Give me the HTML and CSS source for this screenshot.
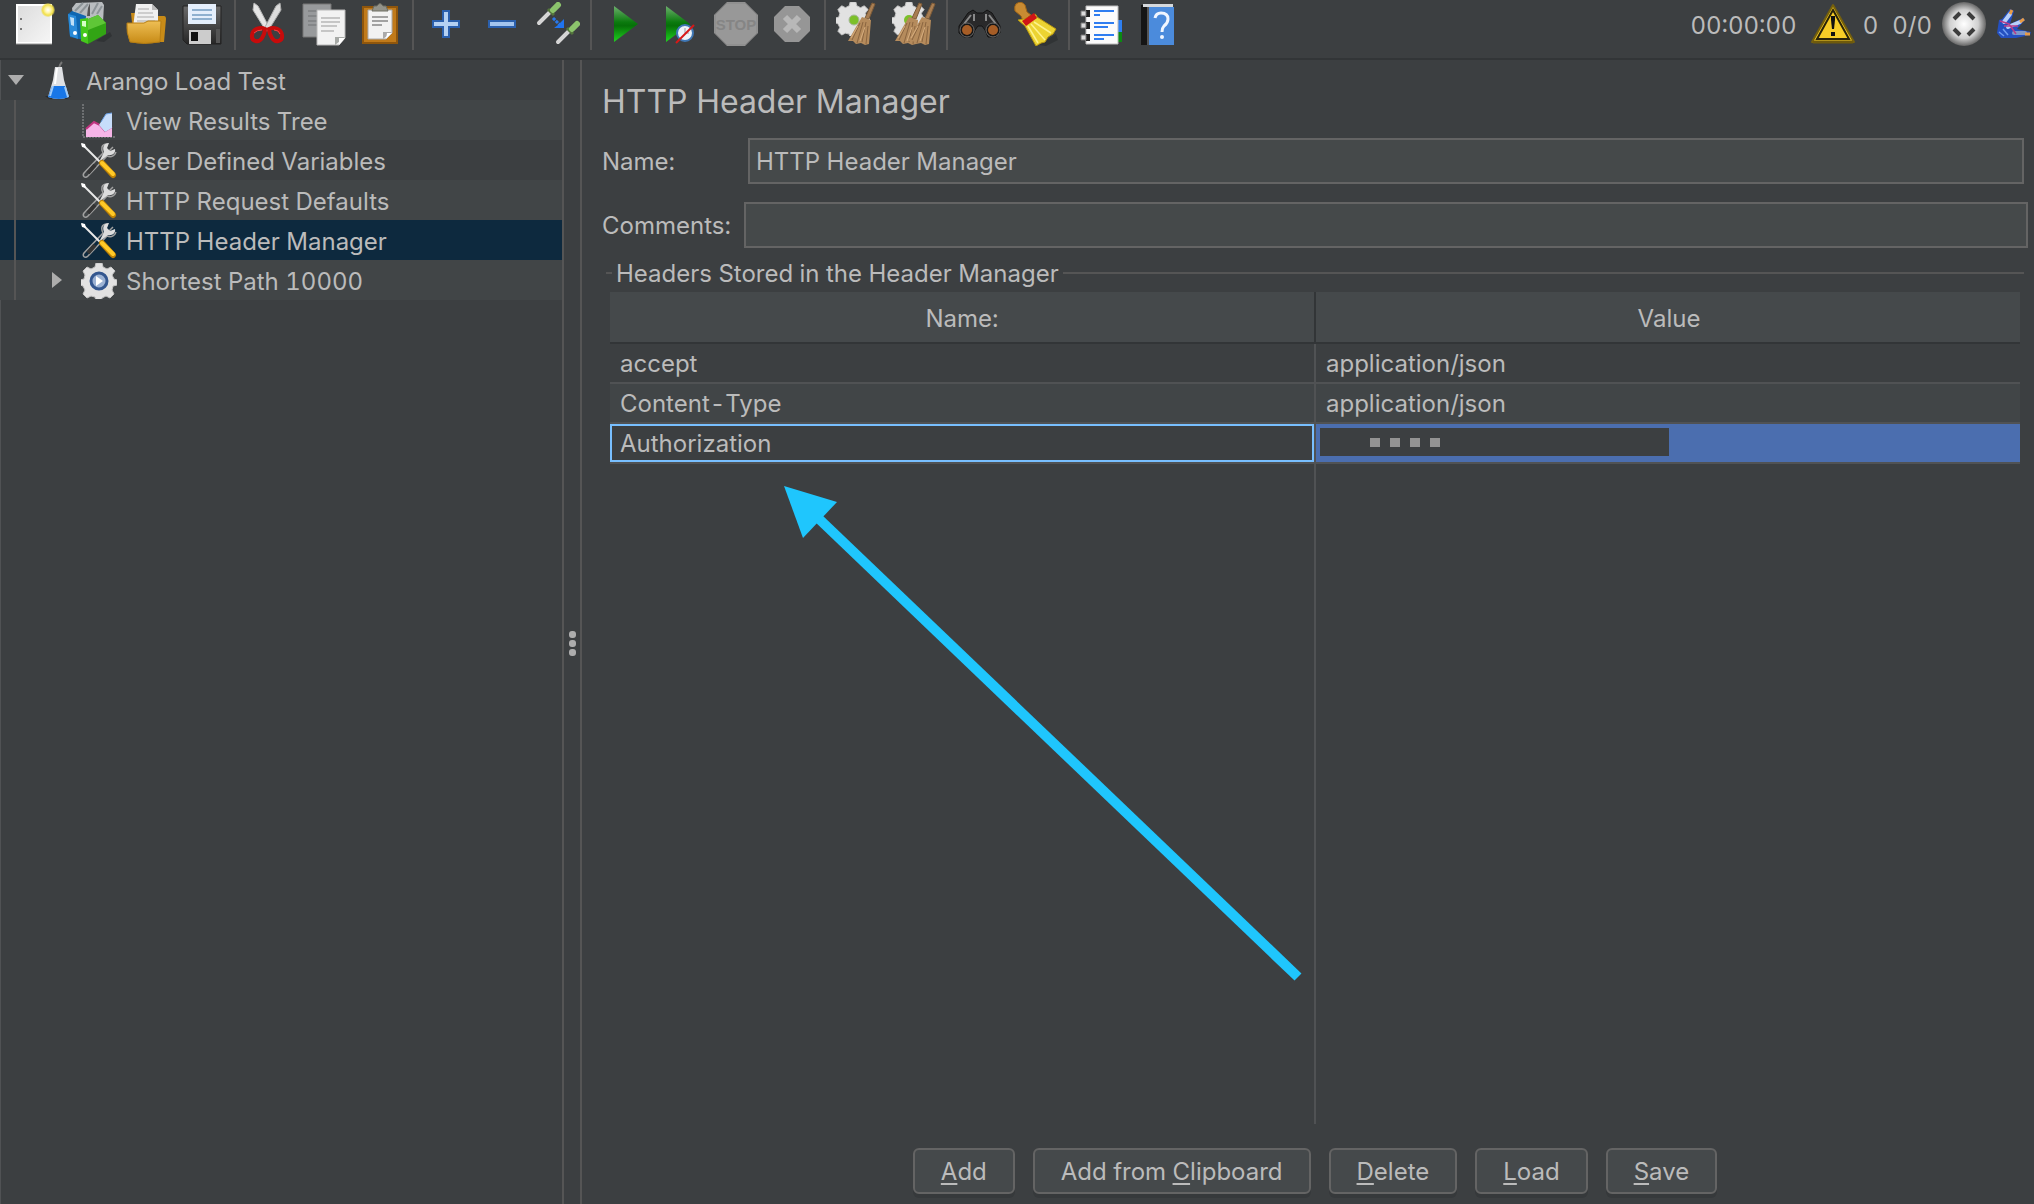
FILE: index.html
```html
<!DOCTYPE html>
<html lang="en">
<head>
<meta charset="utf-8">
<title>Arango Load Test</title>
<link rel="stylesheet" href="styles.css">
</head>
<body>
<svg class="defs" aria-hidden="true">
  <defs>
    <linearGradient id="paper" x1="0" y1="0" x2="1" y2="1"><stop offset="0" stop-color="#dcdcdc"/><stop offset="1" stop-color="#f6f6f6"/></linearGradient>
    <radialGradient id="glow"><stop offset="0" stop-color="#fff"/><stop offset=".4" stop-color="#fff6a8"/><stop offset=".75" stop-color="#f2e04a"/><stop offset="1" stop-color="#e8d84a" stop-opacity=".3"/></radialGradient>
    <linearGradient id="folder" x1="0" y1="0" x2="0" y2="1"><stop offset="0" stop-color="#eebf55"/><stop offset="1" stop-color="#c78a15"/></linearGradient>
    <linearGradient id="green" x1="0" y1="0" x2="0" y2="1"><stop offset="0" stop-color="#6db06d"/><stop offset=".45" stop-color="#0b7a0e"/><stop offset=".55" stop-color="#067008"/><stop offset="1" stop-color="#1fd31f"/></linearGradient>
    <linearGradient id="steel" x1="0" y1="0" x2="0" y2="1"><stop offset="0" stop-color="#6a6a6a"/><stop offset="1" stop-color="#262626"/></linearGradient>
    <radialGradient id="ball"><stop offset="0" stop-color="#fff"/><stop offset=".65" stop-color="#d0d0d0"/><stop offset="1" stop-color="#666"/></radialGradient>
    <symbol id="broom" viewBox="0 0 30 44"><path d="M24 1 27 2 21 17 17 16Z" fill="#a87e52" stroke="#7d5b38"/><path d="M14 15 23 18 21 42 17 43 13 41 8 42 5 39 0 39 8 25Z" fill="#b58b5c"/><path d="M12 21 4 38M15 20 9 41M18 20 14 40M20 24 18 42" stroke="#8a6540" fill="none"/><path d="M10 24 3 36M17 25 12 39" stroke="#d6ad7e" fill="none"/></symbol>
    <symbol id="gear" viewBox="0 0 36 36"><path d="M15 0h6l1 4 4 2 4-2 4 4-3 4 2 4 3 1v5l-4 1-1 4 2 4-4 4-4-2-4 2-1 3h-5l-1-4-4-1-4 2-4-4 2-4-2-4-3-1v-5l4-1 1-4-2-4 4-4 4 2 4-2Z" fill="#e2e2e2" stroke="#c4c4c4"/></symbol>
    <symbol id="tools" viewBox="0 0 40 40"><path d="M33 7 29 11 26 9 27 4C21 4 21 9 23 13L4 33c-2 3 1 6 4 3L27 16c5 2 8-1 9-4" fill="none" stroke="#a0a0a0" stroke-width="1.5"/><path d="M24 12C22 7 24 3 29 3L27 8 30 11 35 9C36 13 32 16 28 15L19 22Z" fill="#ddd"/><path d="M15 25 8 33" stroke="#343434" stroke-width="4"/><path d="M2 4 20 22" stroke="#e9e9e9" stroke-width="2"/><path d="M1 3 5 4 6 8 2 7Z" fill="#fff"/><path d="M22 23 33 35" stroke="#bd8104" stroke-width="6" stroke-linecap="round"/><path d="M22 23 33 34" stroke="#ffc927" stroke-width="4" stroke-linecap="round"/></symbol>
  </defs>
</svg>

<header class="toolbar">
  <button class="tool" aria-label="New"><svg viewBox="0 0 44 44"><path d="M5 3H39V41H5Z" fill="url(#paper)" stroke="#fff" stroke-width="2"/><path d="M4 42H40" stroke="#999"/><path d="M8 17h2M8 27h2" stroke="#777" stroke-width="2"/><circle cx="36" cy="8" r="7" fill="url(#glow)"/></svg></button>
  <button class="tool" aria-label="Templates"><svg viewBox="0 0 44 44"><path d="M28 39 42 30 44 34 36 40Z" fill="#303335"/><path d="M4 6 8 1 34 0 36 3 35 20 6 22Z" fill="#b9bdc0"/><path d="M7 9 15 1M12 11 20 2M24 12 30 1M29 12 34 4" stroke="#8d9498" stroke-width="2"/><path d="M20 6 22 1V14H19Z" fill="#555"/><path d="M0 12 4 9 18 14 16 38 2 35Z" fill="#0f67b1"/><path d="M0 12 8 14 10 37 2 34Z" fill="#2a8bd8"/><path d="M2 15 6 16V24L3 23Z" fill="#bfe0f7"/><circle cx="7" cy="31" r="2" fill="#fff"/><path d="M12 17 20 16V42L13 39Z" fill="#45c81c"/><path d="M20 17 30 13 38 21V32L20 42Z" fill="#32a414"/><path d="M20 17 30 13 38 21 20 28Z" fill="#5fc637"/><path d="M14 19H18V25L14 24Z" fill="#d6ffc6"/><circle cx="17" cy="33" r="2" fill="#fff"/></svg></button>
  <button class="tool" aria-label="Open"><svg viewBox="0 0 44 44"><path d="M7 11H14L15 14H40Q42 14 42 17L40 40H10Z" fill="#c88b17"/><path d="M12 2H28L34 8V25H9Z" fill="#f0f0f0"/><path d="M28 2V8H34" fill="#bbb"/><path d="M14 7H25M14 11H29M13 15H30M13 19H31" stroke="#aaa"/><path d="M3 21H20L24 19H37L36 40Q20 43 6 40Q2 30 3 21Z" fill="url(#folder)" stroke="#b67d12"/></svg></button>
  <button class="tool" aria-label="Save"><svg viewBox="0 0 44 44"><path d="M3 4H41V42H7L3 38Z" fill="url(#steel)" stroke="#222"/><path d="M8 2H36V22H8Z" fill="#e4eefb"/><path d="M12 8H32M12 13H32M12 17H32" stroke="#8fb0cf" stroke-width="2"/><path d="M9 28H31V42H9Z" fill="#ccc"/><path d="M11 30H18V39H11Z" fill="#111"/><path d="M36 27H40V41H36Z" fill="#555"/></svg></button>
  <span class="sep"></span>
  <button class="tool" aria-label="Cut"><svg viewBox="0 0 44 44"><path d="M8 1 12 4 24 27 20 29 7 8Z" fill="#e6e6e6" stroke="#b5b5b5"/><path d="M34 1 30 4 18 27 22 29 35 8Z" fill="#dcdcdc" stroke="#aaa"/><path d="M19 27C15 25 7 26 6 33S13 41 16 36 19 29 19 27ZM23 27C27 25 35 26 36 33S29 41 26 36 23 29 23 27Z" fill="none" stroke="#c70b0b" stroke-width="4"/><path d="M8 31Q11 28 16 28M28 28Q33 28 34 32" fill="none" stroke="#f34545"/></svg></button>
  <button class="tool" aria-label="Copy"><svg viewBox="0 0 44 44"><path d="M1 2H29V35H1Z" fill="#989a9c" stroke="#777"/><path d="M6 9H24M6 14H24M6 19H15M6 23H15" stroke="#717375"/><path d="M15 8H43V36L37 43H15Z" fill="#f2f2f2" stroke="#b8b8b8"/><path d="M19 16H38M19 20H38M19 24H35M19 29H32" stroke="#999"/><path d="M43 35H33V43Z" fill="#a7aaa7"/><path d="M37 43 43 36H37Z" fill="#fff"/></svg></button>
  <button class="tool" aria-label="Paste"><svg viewBox="0 0 44 44"><path d="M5 5H39V41H5Z" fill="#c07a1a" stroke="#8f560c" stroke-width="2"/><path d="M10 8H34V31L28 37H10Z" fill="#f2f2f2" stroke="#aaa"/><path d="M14 15H30M14 19H30M14 23H24" stroke="#888" stroke-width="1.5"/><path d="M34 30H25V37Z" fill="#aaa"/><path d="M28 37 34 31H29Z" fill="#fff"/><path d="M14 9 16 4H19Q22-1 25 4H28L30 9Z" fill="#93938a" stroke="#6c6c60"/></svg></button>
  <span class="sep"></span>
  <button class="tool" aria-label="Expand all"><svg viewBox="0 0 44 44"><path d="M19 9H25V19H35V25H25V35H19V25H9V19H19Z" fill="#b5d1f2" stroke="#2b60ad" stroke-width="2"/></svg></button>
  <button class="tool" aria-label="Collapse all"><svg viewBox="0 0 44 44"><path d="M9 19H35V25H9Z" fill="#a4c5ee" stroke="#2b60ad" stroke-width="2"/></svg></button>
  <button class="tool" aria-label="Toggle"><svg viewBox="0 0 44 44"><path d="M3 21 14 10M22 40 33 29" stroke="#d5d5d5" stroke-width="4" stroke-linecap="round"/><path d="M12 7 18 13M31 26 37 32" stroke="#53743c" stroke-width="3"/><path d="M17 8 22 3M36 27 41 22" stroke="#8cc46c" stroke-width="6" stroke-linecap="round"/><path d="M17 16 24 23" stroke="#2a78e8" stroke-width="3" stroke-dasharray="3 1"/><path d="M28 17V26H18L22 23 24 21Z" fill="#1f74f0"/></svg></button>
  <span class="sep"></span>
  <button class="tool" aria-label="Start"><svg viewBox="0 0 44 44"><path d="M12 4 36 22 12 40Z" fill="url(#green)"/></svg></button>
  <button class="tool" aria-label="Start no pauses"><svg viewBox="0 0 44 44"><path d="M8 4 32 22 8 40Z" fill="url(#green)"/><circle cx="27" cy="31" r="8" fill="#edf3f8" stroke="#3f77b5" stroke-width="2"/><path d="M27 26V31H31" fill="none" stroke="#99a"/><path d="M18 41 36 23" stroke="#d81818" stroke-width="2"/></svg></button>
  <button class="tool" aria-label="Stop"><svg viewBox="0 0 44 44"><path d="M13 0H31L44 13V31L31 44H13L0 31V13Z" fill="#989898"/><path d="M13 1H31L43 13V31L31 43H13L1 31V13Z" fill="none" stroke="#888"/><text x="22" y="28" class="stop-label">STOP</text></svg></button>
  <button class="tool" aria-label="Shutdown"><svg viewBox="0 0 44 44"><path d="M15 4H29L40 15V29L29 40H15L4 29V15Z" fill="#969696"/><path d="M15 15 29 29M29 15 15 29" stroke="#b8b8b8" stroke-width="6"/></svg></button>
  <span class="sep"></span>
  <button class="tool" aria-label="Clear"><svg viewBox="0 0 44 44"><use href="#gear" x="0" y="0" width="34" height="34"/><circle cx="18" cy="18" r="5" fill="#7cc02a" stroke="#a8b89b"/><use href="#broom" x="12" y="0" width="30" height="44"/></svg></button>
  <button class="tool" aria-label="Clear all"><svg viewBox="0 0 44 44"><use href="#gear" x="0" y="0" width="34" height="34"/><circle cx="17" cy="18" r="5" fill="#7cc02a"/><use href="#broom" x="3" y="0" width="30" height="44"/><use href="#broom" x="16" y="0" width="30" height="44"/></svg></button>
  <span class="sep"></span>
  <button class="tool" aria-label="Search"><svg viewBox="0 0 44 44"><path d="M10 11 15 8 19 11 25 11 29 8 34 11 42 24V31L38 35H30L27 28 24 24H20L17 28 14 35H6L1 31V24Z" fill="#29292a" stroke="#131313"/><path d="M13 13 6 22M31 13 38 22M16 12V19M28 12V19" stroke="#898989" stroke-width="2"/><circle cx="9" cy="28" r="7" fill="#171717" stroke="#686868"/><circle cx="35" cy="28" r="7" fill="#171717" stroke="#686868"/><circle cx="9" cy="28" r="5" fill="#a65d26"/><circle cx="35" cy="28" r="5" fill="#a65d26"/></svg></button>
  <button class="tool" aria-label="Reset search"><svg viewBox="0 0 44 44"><path d="M25 43 42 32 44 38 32 44Z" fill="#303335"/><path d="M2 2Q7-2 11 3L13 10 17 13 9 19 7 14 1 9Q0 4 2 2Z" fill="#c98b32" stroke="#a06618"/><path d="M18 14Q22 10 23 15L42 27 39 32 34 35 31 40 27 41 22 44 11 24 4 18 10 17Z" fill="#ecd332" stroke="#b6960f"/><path d="M20 20 37 31M17 22 31 38M14 24 24 41" stroke="#fdf28b" stroke-width="1.5"/><path d="M8 19 20 11 23 16 12 24Z" fill="#cf1616"/></svg></button>
  <span class="sep"></span>
  <button class="tool" aria-label="Function helper"><svg viewBox="0 0 44 44"><path d="M37 18H42V30H37Z" fill="#2e7ff0"/><path d="M37 30H42V40H37Z" fill="#0b8a12"/><path d="M6 4H38V42H6Z" fill="#fbfbfb" stroke="#bbb"/><path d="M14 9H34M14 21H34M14 33H34" stroke="#2f7df0" stroke-width="2"/><path d="M14 13H20M14 25H28M14 37H24" stroke="#2f7df0" stroke-width="2"/><path d="M6 8H10V15H6ZM6 20H10V27H6ZM6 32H10V39H6Z" fill="#222"/><path d="M1 9H6V14H1ZM1 21H6V26H1ZM1 33H6V38H1Z" fill="#ddd" stroke="#777"/></svg></button>
  <button class="tool" aria-label="Help"><svg viewBox="0 0 44 44"><path d="M5 3H14V43H5Z" fill="#151515"/><path d="M11 5H13V43H11Z" fill="#555"/><path d="M7 2H37V5H7Z" fill="#d5d9dd"/><path d="M13 5H38V43H13Z" fill="#4b8bdc"/><path d="M19 16Q20 11 25 11 32 11 32 17 32 21 28 24 26 26 26 30" fill="none" stroke="#f0f6ff" stroke-width="3"/><circle cx="26" cy="35" r="2" fill="#f0f6ff"/></svg></button>

  <div class="status">
    <span class="time">00:00:00</span>
    <svg class="icon" viewBox="0 0 44 44"><path d="M22 3 43 40H1Z" fill="#f7cd27" stroke="#75600c" stroke-width="2" stroke-linejoin="round"/><path d="M22 8 38 37H6Z" fill="none" stroke="#29230a" stroke-width="2"/><path d="M2 40H42" stroke="#6e5a0c" stroke-width="3"/><path d="M20 14H24V18L23 27H21L20 18Z" fill="#111"/><path d="M20 30H24V34H20Z" fill="#111"/></svg>
    <span class="errors">0</span>
    <span class="threads">0/0</span>
    <svg class="icon" viewBox="0 0 44 44"><circle cx="22" cy="22" r="22" fill="url(#ball)"/><path d="M12 17 18 11M26 11 32 17M32 27 26 33M18 33 12 27" stroke="#3d3d3d" stroke-width="4"/></svg>
    <svg class="feather" viewBox="0 0 38 44"><path d="M3 18 1 31 5 36 20 36 34 33 35 30 21 27 29 18 27 16 14 22 18 9 14 7 6 17Z" fill="#2450c0"/><path d="M8 20 14 12M12 25 24 20" stroke="#b9d0fa" stroke-width="4" stroke-linecap="round"/><path d="M18 31H29" stroke="#7f97c8" stroke-width="4" stroke-linecap="round"/><path d="M4 19 13 22 20 32M8 24 22 24" fill="none" stroke="#b83e8b" stroke-width="1.5"/><path d="M3 30 8 34M7 27 12 33" stroke="#6f9bf0" stroke-width="1.5"/><path d="M14 12 16 8M24 20 28 17M29 32H34" stroke="#e89c45" stroke-width="3"/></svg>
  </div>
</header>

<div class="workspace">
  <aside class="side">
    <ul class="tree" role="tree">
      <li role="treeitem" aria-expanded="true">
        <div class="row root"><span class="twist"><svg width="16" height="10" viewBox="0 0 16 10"><path d="M0 0H16L8 10Z" fill="#adadad"/></svg></span><svg class="node" viewBox="0 0 40 40"><path d="M19 8Q20 4 22 2" fill="none" stroke="#777" stroke-width="2"/><path d="M5 36 9 39H27L31 36Z" fill="#292c2e"/><path d="M15 7H22L24 20 29 37Q19 41 8 37L13 20Z" fill="#dfe1e4"/><path d="M12 26H25L29 37Q19 41 8 37Z" fill="#1877e8"/><path d="M13 26 10 36M25 27 28 37" stroke="#9fcbf8" stroke-width="2"/><path d="M17 8 15 24" stroke="#fff" stroke-width="2"/></svg><span class="label">Arango Load Test</span></div>
        <ul role="group">
          <li class="row" role="treeitem"><span class="twist"></span><svg class="node" viewBox="0 0 40 40"><path d="M3 4V37H36" fill="none" stroke="#6d7072" stroke-width="2" stroke-dasharray="2 1"/><path d="M6 37V29L14 22 20 25 25 31 32 27V37Z" fill="#f6b5e8"/><path d="M6 29 14 22 20 25 25 31 32 27" fill="none" stroke="#bf347f" stroke-width="2"/><path d="M19 25 26 14 32 13V28L25 32Z" fill="#c7ddfb"/><path d="M21 22 26 14 32 13" fill="none" stroke="#6ba1e6"/></svg><span class="label">View Results Tree</span></li>
          <li class="row" role="treeitem"><span class="twist"></span><svg class="node"><use href="#tools"/></svg><span class="label">User Defined Variables</span></li>
          <li class="row" role="treeitem"><span class="twist"></span><svg class="node"><use href="#tools"/></svg><span class="label">HTTP Request Defaults</span></li>
          <li class="row selected" role="treeitem" aria-selected="true"><span class="twist"></span><svg class="node"><use href="#tools"/></svg><span class="label">HTTP Header Manager</span></li>
          <li class="row" role="treeitem" aria-expanded="false"><span class="twist"><svg width="16" height="16" viewBox="0 0 16 16"><path d="M4 0 14 8 4 16Z" fill="#adadad"/></svg></span><svg class="node" viewBox="0 0 40 40"><use href="#gear" x="1" y="3" width="36" height="36"/><circle cx="19" cy="21" r="8" fill="#9db3d4" stroke="#34578f" stroke-width="3"/><path d="M16 16 23 21 16 26Z" fill="#fff"/></svg><span class="label">Shortest Path 10000</span></li>
        </ul>
      </li>
    </ul>
  </aside>
  <div class="splitter" role="separator"><i></i><i></i><i></i></div>
  <main class="panel">
    <h1>HTTP Header Manager</h1>
    <div class="field"><label for="name">Name:</label><input id="name" class="focusable" type="text" value="HTTP Header Manager"></div>
    <div class="field"><label for="comments">Comments:</label><input id="comments" type="text"></div>
    <fieldset>
      <legend>Headers Stored in the Header Manager</legend>
      <div class="grid">
        <table>
          <thead><tr><th scope="col">Name:</th><th scope="col">Value</th></tr></thead>
          <tbody>
            <tr><td>accept</td><td>application/json</td></tr>
            <tr><td>Content-Type</td><td>application/json</td></tr>
            <tr class="current"><td>Authorization</td><td><span class="masked"><i></i><i></i><i></i><i></i></span></td></tr>
          </tbody>
        </table>
      </div>
    </fieldset>
    <div class="actions">
      <button><u>A</u>dd</button>
      <button>Add from <u>C</u>lipboard</button>
      <button><u>D</u>elete</button>
      <button><u>L</u>oad</button>
      <button><u>S</u>ave</button>
    </div>
    <svg class="pointer" viewBox="0 0 520 496" aria-hidden="true"><path d="M33 31 514 491" stroke="#1fc6fd" stroke-width="10"/><path d="M0 0 53 16 19 52Z" fill="#1fc6fd"/></svg>
  </main>
</div>
</body>
</html>
```
FILE: styles.css
```css
* { box-sizing: border-box; }

body {
  margin: 0;
  min-height: 100vh;
  display: flex;
  flex-direction: column;
  background: #3c3f41;
  color: #bbbbbb;
  font: 24px/30px Inter, "Liberation Sans", sans-serif;
  font-variant-numeric: tabular-nums;
}

button, input { font: inherit; color: inherit; }
ul { margin: 0; padding: 0; list-style: none; }
.defs { position: absolute; width: 0; height: 0; }

/* Toolbar */
.toolbar {
  display: flex;
  height: 60px;
  padding-left: 6px;
  border-bottom: 2px solid #323537;
}
.tool {
  flex: none;
  width: 56px;
  height: 48px;
  padding: 2px 6px;
  border: 0;
  background: none;
}
.tool svg, .icon { display: block; width: 44px; height: 44px; }
.sep {
  flex: none;
  width: 2px;
  height: 50px;
  margin: 0 4px;
  background: #555555;
}
.stop-label {
  font: bold 15px "Liberation Sans", sans-serif;
  text-anchor: middle;
  fill: #858585;
}
.status {
  display: flex;
  align-items: center;
  height: 48px;
  margin-left: auto;
  white-space: nowrap;
}
.status span { padding-top: 4px; }
.time { margin-right: 14px; }
.errors { margin: 0 14px 0 8px; }
.threads { margin-right: 10px; }
.feather { width: 38px; height: 44px; margin-left: 10px; }

/* Split layout */
.workspace { flex: 1; display: flex; }
.side { width: 562px; flex: none; box-shadow: inset 1px 0 #505254; }
.splitter {
  flex: none;
  width: 20px;
  padding-top: 22px;
  border: solid #555555;
  border-width: 0 2px;
  display: flex;
  flex-direction: column;
  align-items: center;
  justify-content: center;
  gap: 2px;
}
.splitter i { width: 7px; height: 7px; border-radius: 3px; background: #adadad; }

/* Test plan tree */
.row {
  display: flex;
  align-items: center;
  height: 40px;
  padding-left: 48px;
  white-space: nowrap;
}
.row.root { padding-left: 8px; }
[role="group"] .row {
  background: linear-gradient(#555555, #555555) 14px 0 / 2px 100% no-repeat #414547;
}
[role="group"] .row:nth-child(2) { background-color: #3c3f41; }
[role="group"] .row.selected { background-color: #0d293e; }
.twist { display: flex; width: 16px; margin-right: 16px; }
.node { width: 40px; height: 40px; margin-right: 6px; }
.label { padding-top: 4px; }

/* Editor panel */
.panel {
  position: relative;
  flex: 1;
  min-width: 0;
  display: flex;
  flex-direction: column;
  padding: 20px 6px 10px 20px;
}
h1 { margin: 0 0 16px; padding-top: 2px; font-size: 32px; line-height: 40px; font-weight: 400; }
.field { display: flex; align-items: center; height: 46px; margin-bottom: 18px; }
.field + .field { margin-bottom: 10px; }
.field label { width: 142px; flex: none; padding-top: 2px; }
.field input {
  flex: 1;
  min-width: 0;
  height: 46px;
  padding: 0 6px;
  border: 2px solid #646464;
  border-radius: 0;
  background: #45494a;
  outline: 0;
}
.field .focusable { margin: 0 4px; }

fieldset {
  flex: 1;
  display: flex;
  flex-direction: column;
  min-width: 0;
  margin: 0 4px;
  padding: 4px 4px 0;
  border: 0 solid #555555;
  border-top-width: 2px;
}
legend { margin-left: 2px; padding: 2px 4px 0; line-height: 28px; }
.grid {
  flex: 1;
  overflow: hidden;
  background: linear-gradient(#505254, #505254) center / 2px 100% no-repeat;
}
/* Two equal columns; the extra width leaves the divider centred in the grid */
table { width: calc(100% + 2px); table-layout: fixed; border-collapse: separate; border-spacing: 0; }
th {
  height: 52px;
  padding: 4px 10px 0;
  font-weight: 400;
  background: #45494b;
  border-bottom: 2px solid #323537;
}
th:first-child { border-right: 2px solid #323537; }
td { height: 40px; padding: 2px 10px 0; background: #3c3f41; border-bottom: 2px solid #505254; }
td:first-child { border-right: 2px solid #505254; }
tbody tr:nth-child(2) td { background: #414547; }
.current td:first-child { box-shadow: inset 0 0 0 2px #78bfff; }
.current td:last-child { background: #4b6eaf; padding: 0 4px 2px; }
.masked {
  display: flex;
  align-items: center;
  gap: 10px;
  width: 50%;
  height: 28px;
  padding-left: 50px;
  background: #3c3f41;
}
.masked i { width: 10px; height: 9px; background: #939393; }

.actions { display: flex; justify-content: center; gap: 18px; margin: 24px 4px 0; }
.actions button {
  height: 46px;
  padding: 2px 26px 0;
  border: 2px solid #646464;
  border-radius: 6px;
  background: #45494b;
  box-shadow: 0 4px #36393b;
}
u { text-decoration-thickness: 2px; text-underline-offset: 3px; }

/* Annotation arrow drawn over the header table */
.pointer {
  position: absolute;
  left: 202px;
  top: 426px;
  width: 520px;
  height: 496px;
  pointer-events: none;
}
```
